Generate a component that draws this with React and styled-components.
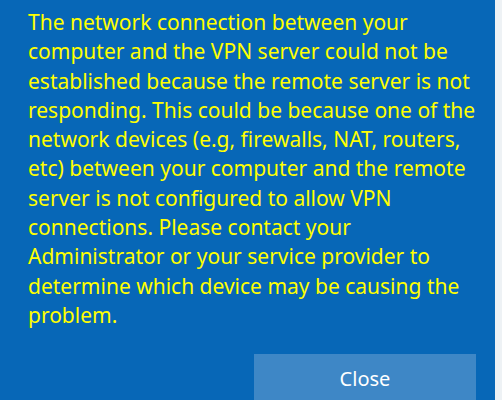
import React from "react";
import styled, { createGlobalStyle } from "styled-components";

const Global = createGlobalStyle`
  html, body { margin: 0; padding: 0; }
  body { font-family: "Noto Sans", "Open Sans", sans-serif; }
`;

const Screen = styled.div`
  width: 502px;
  height: 400px;
  overflow: hidden;
  display: flex;
`;

const Panel = styled.div`
  width: 495px;
  height: 400px;
  background: #0767b7;
  display: flex;
  flex-direction: column;
  padding: 8px 19px 0 28px;
  box-sizing: border-box;
`;

const Edge = styled.div`
  flex: 1;
  background: #eef2f5;
`;

const Message = styled.p`
  margin: 0;
  color: #ffff00;
  font-size: 21px;
  line-height: 29.3px;
`;

const Line = styled.span`
  display: block;
  white-space: nowrap;
`;

const Actions = styled.div`
  margin-top: auto;
  display: flex;
  justify-content: flex-end;
`;

const Button = styled.button`
  width: 222px;
  height: 48px;
  border: none;
  background: #3e87c6;
  color: #ffffff;
  font-family: "Noto Sans", "Open Sans", sans-serif;
  font-size: 20px;
  padding: 0;
  margin-bottom: -2px;
`;

const lines = [
  "The network connection between your",
  "computer and the VPN server could not be",
  "established because the remote server is not",
  "responding. This could be because one of the",
  "network devices (e.g, firewalls, NAT, routers,",
  "etc) between your computer and the remote",
  "server is not configured to allow VPN",
  "connections. Please contact your",
  "Administrator or your service provider to",
  "determine which device may be causing the",
  "problem.",
];

export default function App() {
  return (
    <>
      <Global />
      <Screen>
        <Panel>
          <Message>
            {lines.map((l, i) => (
              <Line key={i}>{l}</Line>
            ))}
          </Message>
          <Actions>
            <Button>Close</Button>
          </Actions>
        </Panel>
        <Edge />
      </Screen>
    </>
  );
}
